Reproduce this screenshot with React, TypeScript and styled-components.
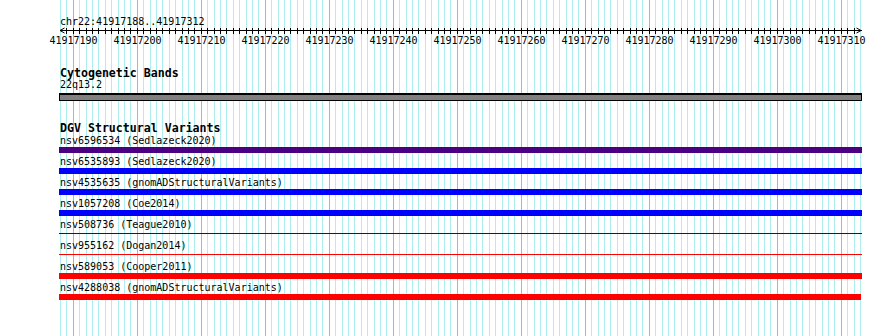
import React from 'react';
import styled, { createGlobalStyle } from 'styled-components';

// view window (bp) and scale
const VIEW_START = 41917188;
const VIEW_END = 41917313;
const BP_PX = 6.4;
const ORIGIN_BP = 41917190;
const ORIGIN_X = 73.3;
const PAGE_W = 890;
const PAGE_H = 336;
const RULER_TOP = 28;

const xOf = (bp: number) => ORIGIN_X + (bp - ORIGIN_BP) * BP_PX;
const px = (bp: number) => Math.floor(xOf(bp));

const bases: number[] = [];
for (let b = VIEW_START; b <= VIEW_END; b++) bases.push(b);

type Variant = {
  id: string;
  source: string;
  color: string;
  thin?: boolean;
  width?: number;
};

const variants: Variant[] = [
  { id: 'nsv6596534', source: 'Sedlazeck2020', color: '#4b0082' },
  { id: 'nsv6535893', source: 'Sedlazeck2020', color: '#0000ff' },
  { id: 'nsv4535635', source: 'gnomADStructuralVariants', color: '#0000ff' },
  { id: 'nsv1057208', source: 'Coe2014', color: '#0000ff' },
  { id: 'nsv508736', source: 'Teague2010', color: '#0000ff', thin: true },
  { id: 'nsv955162', source: 'Dogan2014', color: '#ff0000', thin: true },
  { id: 'nsv589053', source: 'Cooper2011', color: '#ff0000' },
  { id: 'nsv4288038', source: 'gnomADStructuralVariants', color: '#ff0000', width: 802 },
];

const GlobalStyle = createGlobalStyle`
  html, body {
    margin: 0;
    padding: 0;
    background: #ffffff;
  }
`;

export default function App() {
  return (
    <>
      <GlobalStyle />
      <Page>
        <GridLayer width={PAGE_W} height={PAGE_H} shapeRendering="crispEdges">
          {bases.map((b) => (
            <rect
              key={b}
              x={px(b)}
              y={0}
              width={1}
              height={PAGE_H}
              fill={b % 10 === 0 ? '#8cbfdc' : '#aeeeee'}
            />
          ))}
        </GridLayer>

        <Content>
          <ChrLabel>chr22:41917188..41917312</ChrLabel>
          <Ruler width={PAGE_W} height={20} shapeRendering="crispEdges">
            <rect x={60} y={2} width={802} height={1} fill="#000" />
            <path d="M60 2.5 L64.5 0 M60 2.5 L64.5 5" stroke="#000" strokeWidth={1} fill="none" shapeRendering="auto" />
            <path d="M861 2.5 L856.5 0 M861 2.5 L856.5 5" stroke="#000" strokeWidth={1} fill="none" shapeRendering="auto" />
            {bases
              .filter((b) => b > VIEW_START && b < VIEW_END)
              .map((b) => (
                <rect key={b} x={px(b)} y={0} width={1} height={6} fill="#000" />
              ))}
            {bases
              .filter((b) => b % 10 === 0)
              .map((b) => (
                <RulerText key={b} x={px(b) + 0.5} y={44 - RULER_TOP} textAnchor="middle">
                  {b}
                </RulerText>
              ))}
          </Ruler>

          <Track $gap={19}>
            <TrackTitle>Cytogenetic Bands</TrackTitle>
            <BandLabel>22q13.2</BandLabel>
            <BandBar />
          </Track>

          <Track $gap={21}>
            <TrackTitle>DGV Structural Variants</TrackTitle>
            {variants.map((v) => (
              <FeatureRow key={v.id}>
                <FeatureLabel>
                  {v.id} ({v.source})
                </FeatureLabel>
                <FeatureBar $color={v.color} $thin={!!v.thin} $width={v.width ?? 803} />
              </FeatureRow>
            ))}
          </Track>
        </Content>
      </Page>
    </>
  );
}

const Page = styled.div`
  position: relative;
  width: ${PAGE_W}px;
  height: ${PAGE_H}px;
  overflow: hidden;
  background: #ffffff;
  font-family: 'DejaVu Sans Mono', 'Liberation Mono', monospace;
  color: #000000;
`;

const GridLayer = styled.svg`
  position: absolute;
  left: 0;
  top: 0;
  z-index: 0;
`;

const Content = styled.div`
  position: relative;
  z-index: 1;
  display: flex;
  flex-direction: column;
`;

const ChrLabel = styled.div`
  margin-top: 16px;
  padding-left: 60px;
  font-size: 10px;
  line-height: 12px;
  white-space: pre;
`;

const Ruler = styled.svg`
  display: block;
  overflow: visible;
`;

const RulerText = styled.text`
  font-family: 'DejaVu Sans Mono', 'Liberation Mono', monospace;
  font-size: 10px;
  fill: #000000;
`;

const Track = styled.section<{ $gap: number }>`
  display: flex;
  flex-direction: column;
  margin-top: ${({ $gap }) => $gap}px;
  padding-left: 59px;
`;

const TrackTitle = styled.div`
  padding-left: 1px;
  font-size: 11.6px;
  font-weight: bold;
  line-height: 12px;
  white-space: pre;
`;

const BandLabel = styled.div`
  padding-left: 1px;
  font-size: 10px;
  line-height: 11px;
`;

const BandBar = styled.div`
  box-sizing: border-box;
  width: 803px;
  height: 8px;
  margin-top: 3px;
  background: #808080;
  border: 1px solid #000000;
  border-top-width: 2px;
`;

const FeatureRow = styled.div`
  display: flex;
  flex-direction: column;
  height: 21px;
`;

const FeatureLabel = styled.div`
  padding: 1px 0 0 1px;
  font-size: 10px;
  line-height: 11px;
  white-space: pre;
`;

const FeatureBar = styled.div<{ $color: string; $thin: boolean; $width: number }>`
  flex: none;
  width: ${({ $width }) => $width}px;
  height: ${({ $thin }) => ($thin ? 1 : 6)}px;
  margin-top: ${({ $thin }) => ($thin ? 3 : 1)}px;
  background: ${({ $color }) => $color};
`;
